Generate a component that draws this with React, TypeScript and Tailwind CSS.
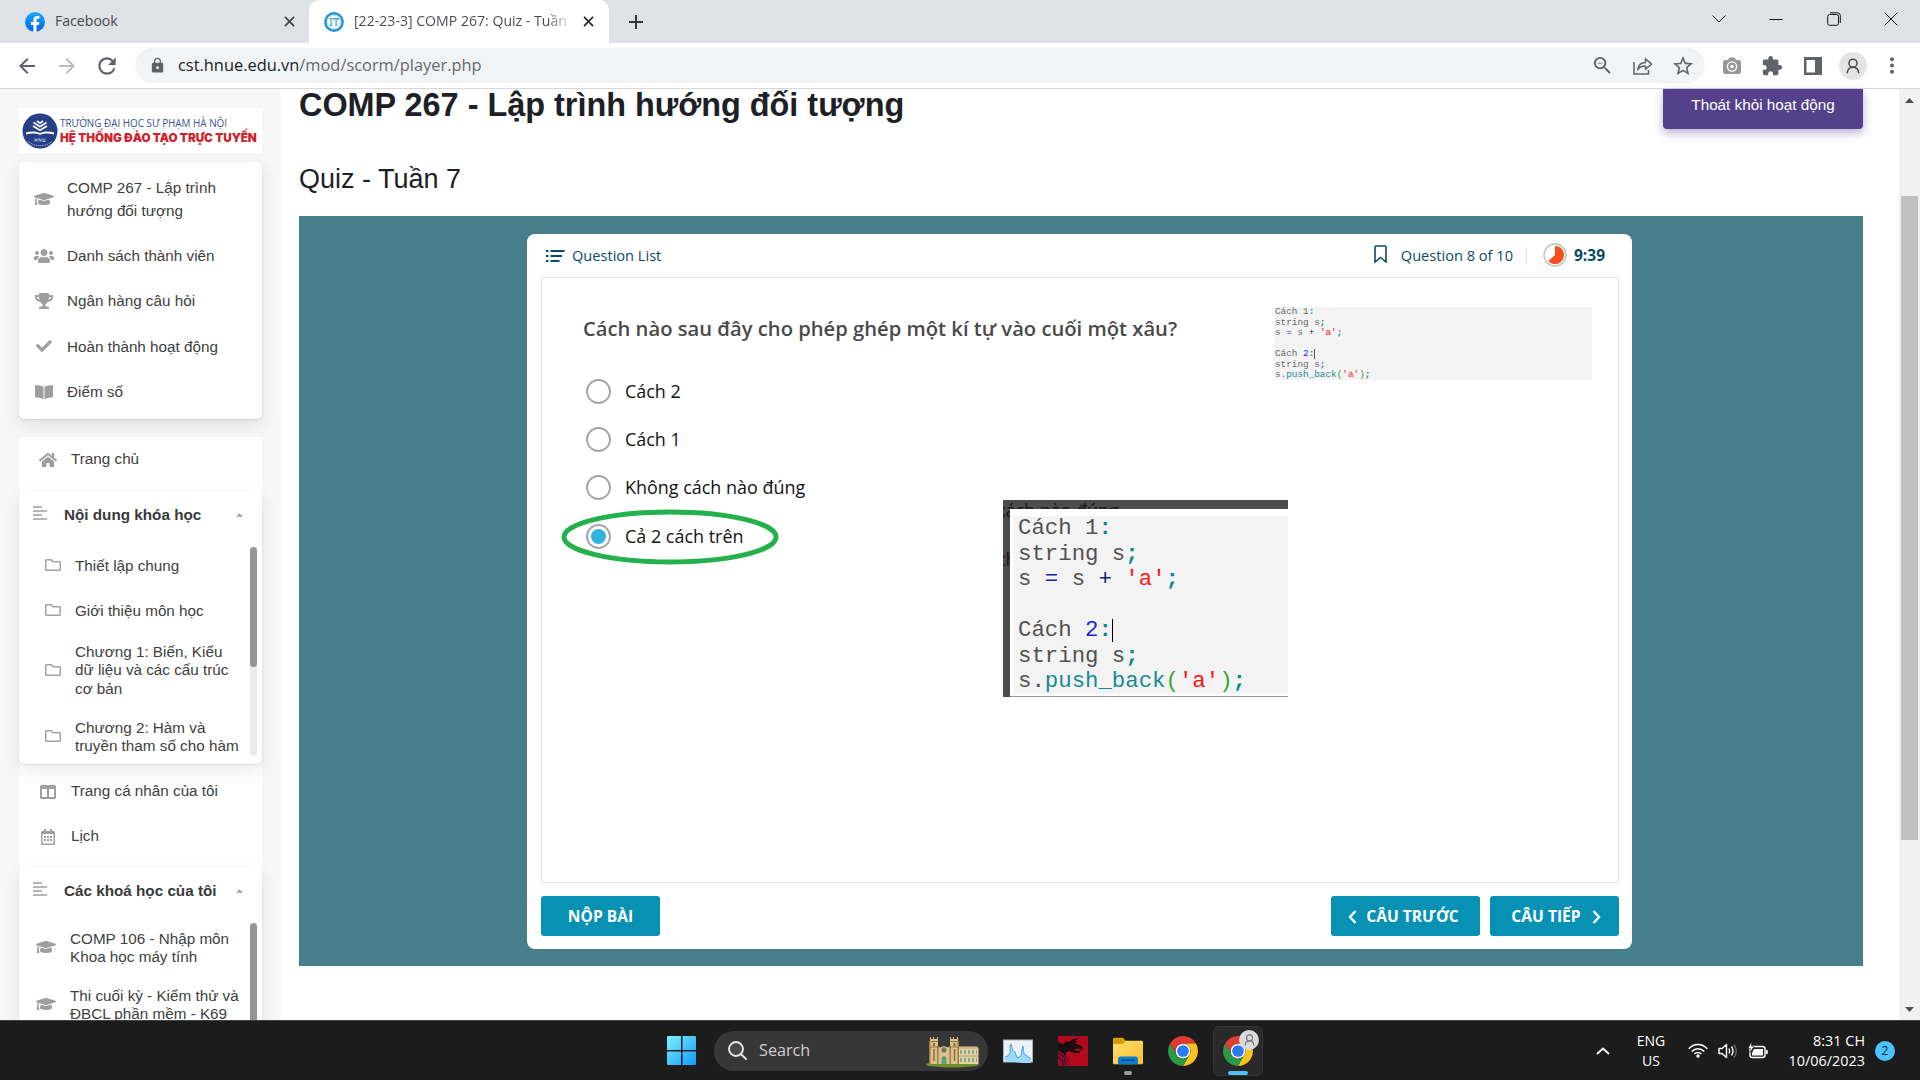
import type { ReactNode } from "react";
import { FaGraduationCap, FaUsers, FaTrophy, FaCheck, FaBookOpen, FaHome, FaRegFolder, FaRegCalendarAlt, FaColumns } from "react-icons/fa";
import { MdArrowBack, MdArrowForward, MdRefresh, MdLock, MdZoomOut, MdStarBorder, MdExtension } from "react-icons/md";

function FacebookIcon() {
  return (
    <svg viewBox="0 0 20 20" className="h-5 w-5 shrink-0">
      <defs>
        <linearGradient id="fb" x1="0" y1="0" x2="0" y2="1">
          <stop offset="0" stopColor="#18acfe" />
          <stop offset="1" stopColor="#0163e0" />
        </linearGradient>
      </defs>
      <circle cx="10" cy="10" r="10" fill="url(#fb)" />
      <path d="M13.9 12.9l.45-2.9h-2.8V8.1c0-.8.4-1.55 1.6-1.55h1.3V4.1s-1.15-.2-2.25-.2c-2.3 0-3.8 1.4-3.8 3.9V10H5.9v2.9h2.5v7a10 10 0 0 0 3.1 0v-7z" fill="#fff" />
    </svg>
  );
}

function SchoolIcon() {
  return (
    <svg viewBox="0 0 20 20" className="h-5 w-5 shrink-0">
      <circle cx="10" cy="10" r="8.7" fill="#fff" stroke="#2392d0" strokeWidth="2.4" />
      <circle cx="10" cy="10" r="6.6" fill="none" stroke="#8cc6e8" strokeWidth=".7" />
      <path d="M5.8 6.600h2.600M7.100 6.600v6.600M5.800 13.400h2.600M9.600 8V6.600h5V8M12.100 6.600v6.600M11.200 13.400h1.800" stroke="#2392d0" strokeWidth="1" fill="none" />
    </svg>
  );
}

function CloseIcon({ className }: { className: string }) {
  return (
    <svg viewBox="0 0 12 12" className={className}>
      <path d="M1 1l10 10M11 1L1 11" stroke="currentColor" strokeWidth="1.7" fill="none" />
    </svg>
  );
}

function PersonIcon({ className }: { className: string }) {
  return (
    <svg viewBox="0 0 14 16" className={className} fill="none" stroke="currentColor" strokeWidth="1.5">
      <circle cx="7" cy="5.2" r="4" />
      <path d="M1.2 15.2c.3-3.6 2-6 5.8-6s5.500 2.400 5.800 6" />
    </svg>
  );
}

function TabStrip() {
  return (
    <div className="flex h-[43px] shrink-0 bg-[#dee1e6] font-['Open_Sans',sans-serif] text-[14.1px] text-[#45494d]">
      <div className="flex w-[309px] items-center pl-[25px] pr-[14px]">
        <FacebookIcon />
        <span className="ml-[10px] flex-1 pb-px">Facebook</span>
        <CloseIcon className="h-[11px] w-[11px] text-[#3c4043]" />
      </div>
      <div className="flex w-[300px] items-center rounded-t-[10px] bg-white pl-[15px] pr-[15px]">
        <SchoolIcon />
        <span className="ml-[10px] w-[219px] overflow-hidden whitespace-nowrap bg-linear-to-r from-[#45494d] from-88% to-transparent bg-clip-text pb-px text-[14.1px] text-transparent">
          [22-23-3] COMP 267: Quiz - Tuần
        </span>
        <CloseIcon className="ml-auto h-[11px] w-[11px] text-[#202124]" />
      </div>
      <div className="flex flex-1 items-center pl-[19px]">
        <svg viewBox="0 0 16 16" className="h-4 w-4">
          <path d="M8 1v14M1 8h14" stroke="#333639" strokeWidth="2" />
        </svg>
        <div className="mb-[5px] ml-auto flex items-center text-[#111]">
          <svg viewBox="0 0 14 14" className="mr-[43px] h-[14px] w-[14px]"><path d="M.5 3.500L7 10l6.500-6.500" fill="none" stroke="currentColor" /></svg>
          <svg viewBox="0 0 14 14" className="mr-[44px] h-[14px] w-[14px]"><path d="M.5 7.500h13" fill="none" stroke="currentColor" /></svg>
          <svg viewBox="0 0 14 14" className="mr-[43px] h-[14px] w-[14px]" fill="none" stroke="currentColor"><rect x=".7" y="2.500" width="10.800" height="10.800" rx="2" /><path d="M3 .8h7.500a2.800 2.800 0 0 1 2.800 2.800V11" /></svg>
          <svg viewBox="0 0 14 14" className="mr-[22px] h-[14px] w-[14px]"><path d="M.7.7l12.600 12.600M13.300.7L.7 13.300" fill="none" stroke="currentColor" /></svg>
        </div>
      </div>
    </div>
  );
}

function Toolbar() {
  return (
    <div className="flex h-[46px] shrink-0 items-center border-b border-[#d5d7da] bg-white text-[#5f6368]">
      <MdArrowBack className="ml-[15px] h-6 w-6" />
      <MdArrowForward className="ml-4 h-6 w-6 text-[#babcbe]" />
      <MdRefresh className="ml-[15px] h-[26px] w-[26px]" />
      <div className="ml-[15px] flex h-[35px] w-[1570px] items-center rounded-full bg-[#f1f3f4] pl-[14px] pr-[10px]">
        <MdLock className="h-[17px] w-[17px]" />
        <span className="ml-[12px] font-['Open_Sans',sans-serif] text-[16.4px] text-[#66696d]">
          <span className="text-[#202124]">cst.hnue.edu.vn</span>/mod/scorm/player.php
        </span>
        <MdZoomOut className="ml-auto h-[23px] w-[23px]" />
        <svg viewBox="0 0 20 18" className="ml-[19px] h-[18px] w-5" fill="none" stroke="currentColor" strokeWidth="1.5">
          <path d="M1 5v12h14.500v-4" />
          <path d="M4.800 12.600c.5-4.500 3-6.800 7.700-7V1.800l6 5.300-6 5.200V9c-3.600 0-5.900 1-7.700 3.600z" strokeLinejoin="round" />
        </svg>
        <MdStarBorder className="ml-[18px] h-6 w-6" />
      </div>
      <svg viewBox="0 0 18 17" className="ml-[18px] h-[17px] w-[18px]">
        <path d="M2 3h3l1.300-2.500h5.400L13 3h3a2 2 0 0 1 2 2v10a2 2 0 0 1-2 2H2a2 2 0 0 1-2-2V5a2 2 0 0 1 2-2z" fill="#989898" />
        <circle cx="9" cy="9.500" r="5.200" fill="#fff" /><circle cx="9" cy="9.500" r="3.900" fill="#999" /><circle cx="9" cy="9.500" r="1.700" fill="#fff" />
      </svg>
      <MdExtension className="ml-[20px] h-[22px] w-[22px]" />
      <svg viewBox="0 0 18 18" className="ml-[21px] h-[18px] w-[18px]"><path d="M0 0h18v18H0zM2.500 3v12.500h8.500V3z" fill="currentColor" fillRule="evenodd" /></svg>
      <span className="ml-[17px] flex h-7 w-7 items-center justify-center rounded-full bg-[#e4e4e4]">
        <PersonIcon className="h-4 w-[14px] text-[#44474a]" />
      </span>
      <svg viewBox="0 0 4 17" className="ml-[23px] h-[17px] w-1" fill="currentColor"><circle cx="2" cy="2.200" r="2" /><circle cx="2" cy="8.500" r="2" /><circle cx="2" cy="14.800" r="2" /></svg>
    </div>
  );
}

function SchoolLogo() {
  return (
    <div className="ml-[19px] mt-[19px] flex h-[45px] w-[243px] shrink-0 items-center bg-white pl-[3px]">
      <svg viewBox="0 0 36 36" className="h-9 w-9 shrink-0">
        <circle cx="18" cy="18" r="17.500" fill="#263f88" />
        <path d="M4 19.500c5-1.500 10-1.500 14 .6 4-2.100 9-2.100 14-.6v2c-5-1.300-10-1.300-14 .3-4-1.600-9-1.600-14-.3z" fill="#fff" />
        <path d="M11.500 9.500l6.500 4.200 6.500-4.200M11 13l7 4.300 7-4.300M15 8l3 2.200L21 8" fill="none" stroke="#fff" strokeWidth="1.700" />
        <path d="M13 25.500v3M15 25.500v3M13 27h2M17 28.500v-3l2 3v-3M21 25.500v3h2v-3" stroke="#cfd6ea" strokeWidth=".8" fill="none" />
        <path d="M6 28.500c6 5.500 18 5.500 24 0" fill="none" stroke="#c3cce6" strokeWidth="1" strokeDasharray="1 .8" />
      </svg>
      <div className="ml-[2px] flex flex-col whitespace-nowrap pt-px font-['Open_Sans',sans-serif]">
        <span className="text-[9.900px] leading-[14px] text-[#3c5392]">TRƯỜNG ĐẠI HỌC SƯ PHẠM HÀ NỘI</span>
        <span className="font-['Inter',sans-serif] text-[11.700px] font-black leading-[17px] text-[#d2202c]">HỆ THỐNG ĐÀO TẠO TRỰC TUYẾN</span>
      </div>
    </div>
  );
}

function CourseItem({ icon, height, children }: { icon: ReactNode; height: string; children: ReactNode }) {
  return (
    <div className={`flex items-center ${height}`}>
      <span className="ml-[15px] flex w-5 justify-center text-[#9e9e9e]">{icon}</span>
      <span className="ml-[13px] leading-[23px]">{children}</span>
    </div>
  );
}

function NavItem({ icon, children }: { icon: ReactNode; children: ReactNode }) {
  return (
    <div className="flex h-[45px] items-center">
      <span className="ml-[19px] flex w-5 justify-center text-[#9e9e9e]">{icon}</span>
      <span className="ml-[13px]">{children}</span>
    </div>
  );
}

function SectionHeader({ title }: { title: string }) {
  return (
    <div className="flex h-[48px] items-center pl-[14px] pr-[19px]">
      <svg viewBox="0 0 14 14" className="mb-1 h-[14px] w-[14px]"><path d="M0 1h9M0 5h14M0 9h9M0 13h14" stroke="#9e9e9e" strokeWidth="1.600" /></svg>
      <span className="ml-[17px] text-[15.250px] font-bold text-[#3a3a3a]">{title}</span>
      <svg viewBox="0 0 8 4" className="ml-auto h-1 w-[7px]"><path d="M0 4l4-4 4 4z" fill="#9e9e9e" /></svg>
    </div>
  );
}

function FolderItem({ height, children }: { height: string; children: ReactNode }) {
  return (
    <div className={`flex items-center ${height}`}>
      <FaRegFolder className="mb-[2px] ml-[26px] h-4 w-4 text-[#a3a3a3]" />
      <span className="ml-[14px] whitespace-nowrap leading-[18.300px]">{children}</span>
    </div>
  );
}

const CARD_SHADOW = "shadow-[0_6px_18px_rgba(0,0,0,0.09),0_1px_2px_rgba(0,0,0,0.1)]";

function Sidebar() {
  return (
    <aside className="flex w-[281px] shrink-0 flex-col overflow-hidden bg-[#f7f7f7] text-[15.250px] text-[#404040]">
      <SchoolLogo />
      <div className={`ml-[19px] mt-[9px] h-[257px] w-[243px] shrink-0 rounded-[5px] bg-white pt-[7px] ${CARD_SHADOW}`}>
        <CourseItem height="h-[60px]" icon={<FaGraduationCap className="h-4 w-5" />}>COMP 267 - Lập trình<br />hướng đối tượng</CourseItem>
        <div className="h-[4px]" />
        <CourseItem height="h-[45px]" icon={<FaUsers className="h-4 w-5" />}>Danh sách thành viên</CourseItem>
        <CourseItem height="h-[45px]" icon={<FaTrophy className="h-4 w-[18px]" />}>Ngân hàng câu hỏi</CourseItem>
        <CourseItem height="h-[46px]" icon={<FaCheck className="h-4 w-4" />}>Hoàn thành hoạt động</CourseItem>
        <CourseItem height="h-[45px]" icon={<FaBookOpen className="h-4 w-[18px]" />}>Điểm số</CourseItem>
      </div>
      <div className="ml-[19px] mt-[18px] flex w-[243px] flex-1 flex-col bg-white">
        <NavItem icon={<FaHome className="h-4 w-[18px]" />}>Trang chủ</NavItem>
        <div className={`mt-[9px] h-[273px] shrink-0 rounded-[5px] bg-white ${CARD_SHADOW}`}>
          <SectionHeader title="Nội dung khóa học" />
          <div className="mt-2 flex">
            <div className="h-[209px] w-[231px] overflow-hidden">
              <FolderItem height="h-[38px]">Thiết lập chung</FolderItem>
              <FolderItem height="h-[52px]">Giới thiệu môn học</FolderItem>
              <FolderItem height="h-[67px]">Chương 1: Biến, Kiểu<br />dữ liệu và các cấu trúc<br />cơ bản</FolderItem>
              <FolderItem height="h-[66px]">Chương 2: Hàm và<br />truyền tham số cho hàm</FolderItem>
            </div>
            <div className="h-[209px] w-[7px] rounded-full bg-[#ebebeb]"><div className="h-[120px] rounded-full bg-[#959595]" /></div>
          </div>
        </div>
        <div className="h-[5px] shrink-0" />
        <NavItem icon={<FaColumns className="h-4 w-4" />}>Trang cá nhân của tôi</NavItem>
        <NavItem icon={<FaRegCalendarAlt className="h-4 w-[14px]" />}>Lịch</NavItem>
        <div className={`mt-[8px] h-[200px] shrink-0 rounded-[5px] bg-white ${CARD_SHADOW}`}>
          <SectionHeader title="Các khoá học của tôi" />
          <div className="mt-2 flex">
            <div className="w-[231px]">
              <div className="flex h-[50px] items-center"><FaGraduationCap className="mb-[2px] ml-[17px] h-4 w-5 text-[#9e9e9e]" /><span className="ml-[14px] whitespace-nowrap leading-[18.300px]">COMP 106 - Nhập môn<br />Khoa học máy tính</span></div>
              <div className="flex h-[64px] items-center"><FaGraduationCap className="mb-[2px] ml-[17px] h-4 w-5 text-[#9e9e9e]" /><span className="ml-[14px] whitespace-nowrap leading-[18.300px]">Thi cuối kỳ - Kiểm thử và<br />ĐBCL phần mềm - K69</span></div>
            </div>
            <div className="h-[140px] w-[7px] rounded-full bg-[#959595]" />
          </div>
        </div>
      </div>
    </aside>
  );
}

function CodeLines({ caret }: { caret: string }) {
  return (
    <>
      <div>Cách 1<b className="text-[#0a8a8a]">:</b></div>
      <div>string s<b className="text-[#0a8a8a]">;</b></div>
      <div>s <span className="text-[#1b1b9c]">=</span> s <span className="text-[#1b1b6c]">+</span> <span className="text-[#ff1414]">'a'</span><b className="text-[#0a8a8a]">;</b></div>
      <div>&nbsp;</div>
      <div className="flex items-center">Cách&nbsp;<span className="text-[#2222e6]">2</span><b className="text-[#0a8a8a]">:</b><span className={caret} /></div>
      <div>string s<b className="text-[#0a8a8a]">;</b></div>
      <div>s.<span className="text-[#178a96]">push_back</span><span className="text-[#3aa23a]">(</span><span className="text-[#ff1414]">'a'</span><span className="text-[#3aa23a]">)</span><b className="text-[#0a8a8a]">;</b></div>
    </>
  );
}

function Option({ label, checked }: { label: string; checked?: boolean }) {
  return (
    <div className="flex h-[48.300px] items-center">
      <span className="flex h-[25px] w-[25px] items-center justify-center rounded-full border-2 border-[#a6a6a6] bg-white">
        {checked && <span className="h-[15px] w-[15px] rounded-full bg-[#30b4de]" />}
      </span>
      <span className="ml-[14px] text-[17.950px] text-[#111]">{label}</span>
    </div>
  );
}

function QuizPlayer() {
  return (
    <div className="h-[750px] w-[1564px] bg-[#467f8b] pl-[228px] pt-[18px] font-['Open_Sans',sans-serif]">
      <div className="h-[715px] w-[1105px] rounded-lg bg-white pl-[14px] pr-[13px] text-[#0c4a63]">
        <div className="flex h-[43px] items-center text-[14.600px]">
          <svg viewBox="0 0 19 12" className="ml-[5px] h-3 w-[19px]" stroke="currentColor" strokeWidth="1.800"><path d="M0 1h2.500M4.500 1h14M0 6h2.500M4.500 6h11.500M0 11h2.500M4.500 11h9" /></svg>
          <span className="ml-[7px]">Question List</span>
          <svg viewBox="0 0 13 18" className="mb-[4px] ml-auto h-[18px] w-[13px]" fill="none" stroke="currentColor" strokeWidth="1.600"><path d="M1 2.200Q1 1 2.200 1h8.600Q12 1 12 2.200V17l-5.500-4.500L1 17z" /></svg>
          <span className="ml-[14px]">Question 8 of 10</span>
          <span className="ml-[13px] h-[18px] w-px bg-[#dbe5ea]" />
          <svg viewBox="0 0 24 24" className="mb-px ml-[16px] h-6 w-6"><circle cx="12" cy="12" r="11" fill="#fff" stroke="#bdbdbd" strokeWidth="1.300" /><path d="M12 12V3a9 9 0 1 1-6.700 15z" fill="#fa4d1d" /></svg>
          <span className="ml-[7px] mr-[14px] text-[15.500px] font-bold">9:39</span>
        </div>
        <div className="relative flex h-[606px] border border-[#dfe2e2] pl-[41px]">
          <div className="pt-[36px]">
            <h3 className="mb-[25px] h-7 whitespace-nowrap text-[20.200px] font-semibold leading-7 text-[#494949]">Cách nào sau đây cho phép ghép một kí tự vào cuối một xâu?</h3>
            <div className="pl-[3px]">
              <Option label="Cách 2" />
              <Option label="Cách 1" />
              <Option label="Không cách nào đúng" />
              <Option label="Cả 2 cách trên" checked />
            </div>
          </div>
          <div className="ml-auto mr-[26px] mt-[29px] h-[73px] w-[318px] whitespace-pre bg-[#f3f3f3] pl-px font-['Liberation_Mono',monospace] text-[9.350px] leading-[10.500px] text-[#686868]">
            <CodeLines caret="h-[10px] w-px bg-[#555]" />
          </div>
          <svg viewBox="0 0 220 58" className="absolute left-[18px] top-[230px] h-[58px] w-[220px]"><ellipse cx="110" cy="29" rx="106" ry="25" fill="none" stroke="#22b14c" strokeWidth="5" /></svg>
          <div className="absolute left-[461px] top-[222px] h-[197px] w-[285px] overflow-hidden bg-[#4c4c4c] text-[#151515]">
            <div className="absolute -left-[6px] -top-[2px] whitespace-nowrap text-[17.900px] leading-6">cách nào đúng</div>
            <div className="absolute -left-[6px] top-[47px] text-[17.900px] leading-6">ch</div>
            <div className="absolute left-[7px] top-[9px] h-[188px] w-[278px] border-b border-[#999] bg-white pl-1 pt-[7px]">
              <div className="h-[178px] whitespace-pre bg-[#f3f3f3] pl-1 font-['Liberation_Mono',monospace] text-[22.350px] leading-[25.500px] text-[#515151]">
                <CodeLines caret="h-[23px] w-px bg-black" />
              </div>
            </div>
          </div>
        </div>
        <div className="mt-[13px] flex h-10 gap-[10px] text-[15.600px] font-bold text-white">
          <div className="mr-auto flex w-[119px] items-center justify-center rounded-[3px] bg-[#0792b3] pt-px">NỘP BÀI</div>
          <div className="flex w-[149px] items-center justify-center gap-[9px] rounded-[3px] bg-[#0792b3] pr-[4px] pt-px">
            <svg viewBox="0 0 9 14" className="h-[14px] w-[9px]"><path d="M7.500 1L2 7l5.500 6" fill="none" stroke="#fff" strokeWidth="2.400" /></svg>CÂU TRƯỚC
          </div>
          <div className="flex w-[129px] items-center justify-center gap-[11px] rounded-[3px] bg-[#0792b3] pl-[3px] pt-px">
            CÂU TIẾP<svg viewBox="0 0 9 14" className="h-[14px] w-[9px]"><path d="M1.500 1L7 7l-5.500 6" fill="none" stroke="#fff" strokeWidth="2.400" /></svg>
          </div>
        </div>
      </div>
    </div>
  );
}

function ChromeLogo() {
  return (
    <svg viewBox="0 0 24 24" className="h-[30px] w-[30px]">
      <path d="M1.610 6A12 12 0 0 1 22.390 6H12A6 6 0 0 0 6.800 15z" fill="#e33b2e" />
      <path d="M22.390 6A12 12 0 0 1 12 24L17.200 15A6 6 0 0 0 12 6z" fill="#fcc31e" />
      <path d="M12 24A12 12 0 0 1 1.610 6L6.800 15A6 6 0 0 0 17.200 15z" fill="#2a9a48" />
      <circle cx="12" cy="12" r="5.900" fill="#fff" />
      <circle cx="12" cy="12" r="4.700" fill="#2d7cee" />
    </svg>
  );
}

function CastleArt() {
  return (
    <svg viewBox="0 0 53 32" className="h-8 w-[53px]">
      <ellipse cx="26.500" cy="28.500" rx="26.500" ry="3" fill="#6f8f2c" />
      <path d="M31 12l2-1.500h18l1.500 2V28H31z" fill="#e6d2a4" />
      <path d="M31 12h21.500M32 20h20" stroke="#b8935c" strokeWidth=".9" />
      <path d="M34 16h17M34 24h17" stroke="#7fae98" strokeWidth="4" strokeDasharray="2 2" />
      <path d="M4 4V1h1v2h2V1h1v2h3V1h1v10h12V1h1v2h2V1h1v2h3V1h1v27H4z" fill="#dcc08a" />
      <path d="M3 5h1.500v23H3zM11 10h1.500v18H11zM23.500 10H25v18h-1.500zM31.500 5H33v23h-1.500z" fill="#a07a45" />
      <path d="M4.500 5.500H12M24.500 5.500H32M4.500 11H12M24.500 11H32M12 11h12" stroke="#7a5f38" strokeWidth=".8" />
      <path d="M7 7h2v3H7zM27.500 7h2v3h-2zM7.300 13h1.400v12H7.300zM27.800 13h1.400v12h-1.400z" fill="#8a6a3c" />
      <circle cx="18" cy="14" r="3.300" fill="#77746a" stroke="#f0deb0" strokeWidth=".8" />
      <path d="M15.500 28v-6q2.500-4 5 0v6z" fill="#5d9f7d" />
    </svg>
  );
}

function Taskbar() {
  return (
    <div className="flex h-[60px] shrink-0 items-center border-t border-[#3f4342] bg-[#1c1c1c] font-['Open_Sans',sans-serif] text-white">
      <svg viewBox="0 0 30 30" className="ml-[667px] h-[30px] w-[30px]">
        <defs>
          <linearGradient id="win" x1="0" y1="0" x2="30" y2="30" gradientUnits="userSpaceOnUse"><stop offset="0" stopColor="#80f2ff" /><stop offset=".5" stopColor="#45c3fb" /><stop offset="1" stopColor="#0a96ff" /></linearGradient>
        </defs>
        <path d="M1 0h13v14H0V1a1 1 0 0 1 1-1zM15.500 0H28a1 1 0 0 1 1 1v13H15.500zM0 15.500h14v13.500H1a1 1 0 0 1-1-1zM15.500 15.500H29V28a1 1 0 0 1-1 1H15.500z" fill="url(#win)" />
      </svg>
      <div className="ml-[17px] flex h-10 w-[274px] items-center rounded-full bg-[#373737] pl-[14px]">
        <svg viewBox="0 0 19 19" className="h-[19px] w-[19px]" fill="none" stroke="#e8e8e8" strokeWidth="1.900"><circle cx="8" cy="8" r="7" fill="#4a4a4a" /><path d="M12.800 13l5.200 5" strokeLinecap="round" /></svg>
        <span className="ml-[12px] text-[16.200px] text-[#cfcfcf]">Search</span>
        <span className="ml-auto mr-[9px] mt-[3px]"><CastleArt /></span>
      </div>
      <svg viewBox="0 0 30 24" className="ml-[15px] h-6 w-[30px]">
        <rect x=".5" y="1" width="29" height="22" fill="#edf1f5" stroke="#aab1b8" />
        <path d="M2 22v-4l3-1 2-3V6l1-1 2 7 2 1 2 6 3-1 1-1 1-7 1-3 1 8 3 2 4 3v5z" fill="#9dd8f8" />
        <path d="M2 18l3-1 2-3V6l1-1 2 7 2 1 2 6 3-1 1-1 1-7 1-3 1 8 3 2 4 3" fill="none" stroke="#4ba6de" />
      </svg>
      <svg viewBox="0 0 30 30" className="ml-[25px] h-[30px] w-[30px]">
        <path d="M0 0h30v30H0z" fill="#b50a1d" />
        <path d="M0 14l7 4 2 5 4 7H0z" fill="#8d0c2b" />
        <path d="M0 6l4 2 3-1 1-2 3 1 4-3 6-1-4 3 3 0-3 2 4 2 3 1 1 4-2-1-1 1-2-2-2 1-2 0 3 2 4 0-2 2-5 0-5-2-3 2 0 4-3-4-6-3z" fill="#1b0d12" />
        <path d="M1 17l5 4 2 8M0 21l4 3 2 6M9 20l2 5" fill="none" stroke="#3a0c1b" />
      </svg>
      <div className="relative ml-[25px]">
        <svg viewBox="0 0 30 28" className="h-7 w-[30px]">
          <defs>
            <linearGradient id="fold" x1="0" y1="0" x2="1" y2="1"><stop offset="0" stopColor="#ffdf72" /><stop offset="1" stopColor="#fdbf2d" /></linearGradient>
          </defs>
          <path d="M0 2a1.200 1.200 0 0 1 1.200-1.200H10L13 4v6H0z" fill="#dc9c07" />
          <path d="M0 7h10l3-3.200h15.800A1.200 1.200 0 0 1 30 5v21a1.200 1.200 0 0 1-1.200 1.200H1.200A1.200 1.200 0 0 1 0 26z" fill="url(#fold)" />
          <path d="M5 27.200V22a2.400 2.400 0 0 1 2.400-2.400h15.200A2.400 2.400 0 0 1 25 22v5.200z" fill="#0f7bd0" />
          <path d="M9 23.300h12" stroke="#074a85" strokeWidth="1.400" strokeLinecap="round" />
        </svg>
        <span className="absolute -bottom-[10px] left-[11px] h-1 w-2 rounded-full bg-[#9a9a9a]" />
      </div>
      <div className="ml-[25px]"><ChromeLogo /></div>
      <div className="relative ml-[15px] flex h-[50px] w-[50px] items-center justify-center rounded-md border border-[#343434] bg-[#292929]">
        <ChromeLogo />
        <span className="absolute right-[3px] top-[3px] flex h-5 w-5 items-center justify-center rounded-full bg-[#dadada]"><PersonIcon className="h-3 w-[11px] text-[#777]" /></span>
        <span className="absolute bottom-0 left-[14px] h-1 w-5 rounded-full bg-[#4cc2ff]" />
      </div>
      <svg viewBox="0 0 14 8" className="ml-auto h-2 w-[14px]"><path d="M1 7l6-5.500L13 7" fill="none" stroke="#fff" strokeWidth="1.700" /></svg>
      <div className="ml-[26px] w-[30px] text-center text-[14px] leading-5">ENG<br />US</div>
      <svg viewBox="0 0 20 15" className="ml-[22px] h-[15px] w-5" fill="none" stroke="#fff" strokeWidth="1.500"><path d="M.8 5.700c5.200-5.600 13.200-5.600 18.400 0M3.700 8.500c3.600-3.700 9-3.700 12.600 0M6.500 11c2-2 5-2 7 0" /><circle cx="10" cy="13" r="1.700" fill="#fff" stroke="none" /></svg>
      <svg viewBox="0 0 20 18" className="ml-[10px] h-[18px] w-5" fill="none" stroke="#fff" strokeWidth="1.400"><path d="M1 6.500h3L8.500 2.500v13L4 11.500H1z" strokeLinejoin="round" /><path d="M11 6.500q1.500 2.500 0 5M13.500 4.500q3 4.500 0 9" /><path d="M16 2.500q4.500 6.500 0 13" stroke="#666" /></svg>
      <svg viewBox="0 0 20 17" className="ml-[10px] h-[17px] w-5"><rect x="2" y="4.500" width="15" height="11" rx="2.500" fill="none" stroke="#fff" strokeWidth="1.400" /><path d="M6 7h9v6.500H4V11zM18 8h1.700v4H18z" fill="#fff" /><path d="M3.500 0L0 6.500h2.500L2 10.500l4-6H3.500z" fill="#fff" stroke="#1c1c1c" strokeWidth=".5" /></svg>
      <div className="ml-[19px] w-[78px] whitespace-nowrap text-right text-[14.400px] leading-5">8:31 CH<br />10/06/2023</div>
      <span className="ml-[10px] mr-[25px] flex h-5 w-5 items-center justify-center rounded-full bg-[#4cc2ff] text-[12px] text-[#10242e]">2</span>
    </div>
  );
}

export default function App() {
  return (
    <div className="flex h-[1080px] w-[1920px] flex-col overflow-hidden bg-white font-['Liberation_Sans',sans-serif]">
      <TabStrip />
      <Toolbar />
      <div className="flex h-[931px] shrink-0">
        <Sidebar />
        <main className="flex flex-1 flex-col pl-[18px]">
          <div className="flex h-[68px] justify-between pr-[36px]">
            <h1 className="whitespace-nowrap text-[32.400px] font-bold leading-[33px] text-[#1d2125]">COMP 267 - Lập trình hướng đối tượng</h1>
            <div className="flex h-10 w-[200px] items-start justify-center rounded-b-[4px] bg-[#55408c] pt-[6px] text-[15.250px] leading-5 text-white shadow-[0_4px_10px_rgba(85,64,140,0.4)]">Thoát khỏi hoạt động</div>
          </div>
          <h2 className="h-[59px] pt-[6px] text-[27px] leading-[32px] text-[#1d2125]">Quiz - Tuần 7</h2>
          <QuizPlayer />
        </main>
        <div className="flex w-[21px] flex-col items-center bg-[#f1f1f1]">
          <svg viewBox="0 0 9 5" className="mt-[9px] h-[5px] w-[9px]"><path d="M0 5l4.500-5L9 5z" fill="#505050" /></svg>
          <div className="mt-[93px] h-[644px] w-[17px] bg-[#c1c1c1]" />
          <svg viewBox="0 0 9 5" className="mb-[8px] mt-auto h-[5px] w-[9px]"><path d="M0 0l4.500 5L9 0z" fill="#505050" /></svg>
        </div>
      </div>
      <Taskbar />
    </div>
  );
}
